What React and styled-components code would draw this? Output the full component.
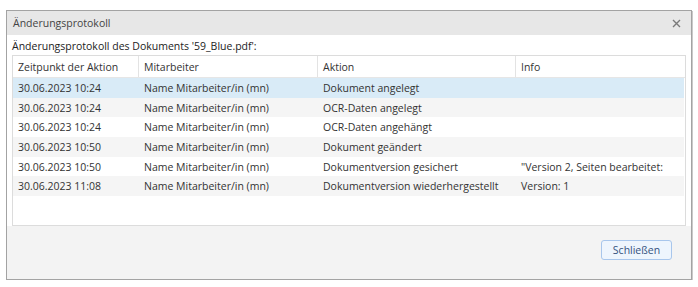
import React from 'react';
import styled, { createGlobalStyle } from 'styled-components';

const GlobalStyle = createGlobalStyle`
  body {
    margin: 0;
    background: #ffffff;
    font-family: "Open Sans", "Noto Sans", sans-serif;
  }
`;

const rows = [
    { time: '30.06.2023 10:24', user: 'Name Mitarbeiter/in (mn)', action: 'Dokument angelegt', info: '' },
    { time: '30.06.2023 10:24', user: 'Name Mitarbeiter/in (mn)', action: 'OCR-Daten angelegt', info: '' },
    { time: '30.06.2023 10:24', user: 'Name Mitarbeiter/in (mn)', action: 'OCR-Daten angehängt', info: '' },
    { time: '30.06.2023 10:50', user: 'Name Mitarbeiter/in (mn)', action: 'Dokument geändert', info: '' },
    { time: '30.06.2023 10:50', user: 'Name Mitarbeiter/in (mn)', action: 'Dokumentversion gesichert', info: '"Version 2, Seiten bearbeitet:' },
    { time: '30.06.2023 11:08', user: 'Name Mitarbeiter/in (mn)', action: 'Dokumentversion wiederhergestellt', info: 'Version: 1' },
];

const columns = ['Zeitpunkt der Aktion', 'Mitarbeiter', 'Aktion', 'Info'];

const App = () => {
    return (
        <>
            <GlobalStyle />
            <Dialog>
                <TitleBar>
                    <span>Änderungsprotokoll</span>
                    <CloseButton aria-label="close">
                        <svg width="9" height="9" viewBox="0 0 9 9">
                            <path d="M1 1 L8 8 M8 1 L1 8" stroke="#7a7a7a" strokeWidth="1.4" />
                        </svg>
                    </CloseButton>
                </TitleBar>
                <Body>
                    <Caption>Änderungsprotokoll des Dokuments '59_Blue.pdf':</Caption>
                    <Table>
                        <HeaderRow>
                            {columns.map((c, i) => (
                                <HeadCell key={c} $last={i === columns.length - 1}>{c}</HeadCell>
                            ))}
                        </HeaderRow>
                        {rows.map((r, i) => (
                            <Row key={i} $selected={i === 0} $odd={i % 2 === 1}>
                                <Cell>{r.time}</Cell>
                                <Cell>{r.user}</Cell>
                                <Cell>{r.action}</Cell>
                                <Cell>{r.info}</Cell>
                            </Row>
                        ))}
                    </Table>
                </Body>
                <Footer>
                    <Button>Schließen</Button>
                </Footer>
            </Dialog>
        </>
    );
}

const Dialog = styled.div`
    margin: 10px 0 0 6px;
    width: 684px;
    height: 268px;
    border: 1px solid #a3a3a3;
    box-shadow: 1px 1px 0 #c9c9c9;
    display: flex;
    flex-direction: column;
    background: #f3f3f3;
    font-size: 10.5px;
    color: #333333;
`;

const TitleBar = styled.div`
    height: 24px;
    background: #e7e7e7;
    display: flex;
    align-items: center;
    justify-content: space-between;
    padding: 0 10px 0 6px;
    color: #444444;
`;

const CloseButton = styled.span`
    display: flex;
    align-items: center;
`;

const Body = styled.div`
    background: #ffffff;
    padding: 0 5px 0 5px;
    display: flex;
    flex-direction: column;
`;

const Caption = styled.div`
    height: 20px;
    display: flex;
    align-items: center;
    padding-top: 1px;
    box-sizing: border-box;
    color: #222222;
`;

const Table = styled.div`
    border: 1px solid #dcdcdc;
    height: 169px;
    background: #ffffff;
`;

const grid = `
    display: grid;
    grid-template-columns: 126px 179px 198px 1fr;
`;

const HeaderRow = styled.div`
    ${grid}
    height: 21px;
    border-bottom: 1px solid #e6e6e6;
`;

const HeadCell = styled.div`
    display: flex;
    align-items: center;
    padding-left: 5px;
    border-right: ${p => p.$last ? 'none' : '1px solid #e3e3e3'};
    color: #333333;
`;

const Row = styled.div`
    ${grid}
    height: 19.7px;
    background: ${p => p.$selected ? '#d9ebf7' : p.$odd ? '#f5f5f5' : '#ffffff'};
    margin-right: 1px;
`;

const Cell = styled.div`
    display: flex;
    align-items: center;
    padding-left: 5px;
    white-space: nowrap;
    overflow: hidden;
    color: #333333;
`;

const Footer = styled.div`
    flex: 1;
    display: flex;
    justify-content: flex-end;
    align-items: flex-start;
    padding: 14px 19px 0 0;
`;

const Button = styled.button`
    width: 71px;
    height: 20px;
    border: 1px solid #a8c6ec;
    border-radius: 3px;
    background: #eef5fd;
    color: #34527f;
    font-family: inherit;
    font-size: 10.5px;
    padding: 0;
    cursor: pointer;
`;

export default App;
